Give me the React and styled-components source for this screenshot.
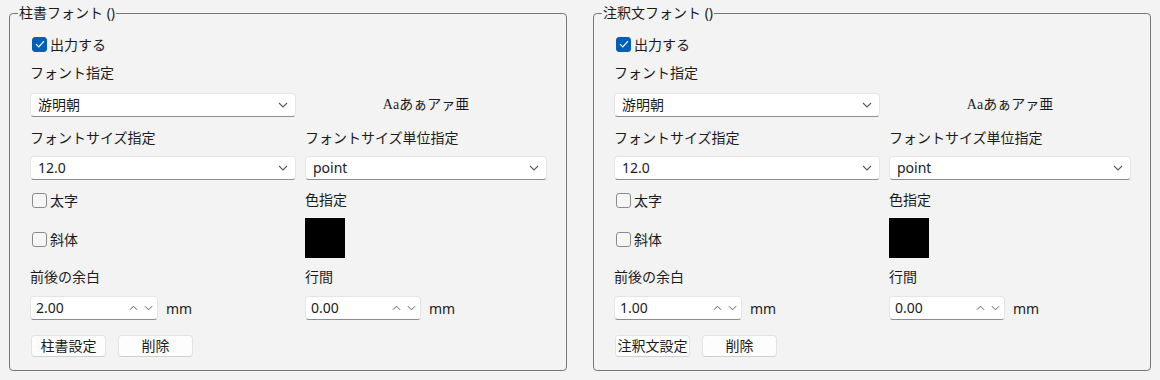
import React from 'react';
import styled, { createGlobalStyle } from 'styled-components';

const GlobalStyle = createGlobalStyle`
  html, body {
    margin: 0;
    background: #f3f3f3;
  }

  body {
    font-family: "Noto Sans", "Noto Sans CJK JP", sans-serif;
    font-size: 14px;
    color: #1b1b1b;
  }
`;

const Page = styled.div`
  display: flex;
  gap: 26px;
  padding: 3px 0 0 9px;
  width: 1160px;
  height: 380px;
  box-sizing: border-box;
`;

const Group = styled.fieldset`
  margin: 0;
  padding: 0;
  min-width: 0;
  width: 558px;
  height: 368px;
  box-sizing: border-box;
  border: 1px solid #767676;
  border-radius: 4px;
`;

const Legend = styled.legend`
  margin-left: 8px;
  padding: 0 1px;
  font-size: 14px;
  line-height: 20px;
`;

const Body = styled.div`
  display: flex;
  flex-direction: column;
  padding: 11px 0 0 20px;
`;

const Row = styled.div`
  display: grid;
  grid-template-columns: 266px 242px;
  column-gap: 9px;
  align-items: ${(p) => p.$align || 'center'};
  margin-top: ${(p) => p.$gap || 0}px;
`;

const Stack = styled.div`
  display: flex;
  flex-direction: column;
  gap: ${(p) => p.$gap}px;
`;

const Label = styled.div`
  height: 20px;
  line-height: 20px;
  white-space: nowrap;
`;

const CheckRow = styled.label`
  display: flex;
  align-items: center;
  gap: 3px;
  height: 20px;
  padding-left: 2px;
  white-space: nowrap;
`;

const Box = styled.span`
  display: inline-flex;
  align-items: center;
  justify-content: center;
  width: 15px;
  height: 15px;
  box-sizing: border-box;
  border-radius: 3px;
  border: 1px solid ${(p) => (p.$checked ? '#005fb8' : '#8a8a8a')};
  background: ${(p) => (p.$checked ? '#005fb8' : '#f6f6f6')};
`;

const Field = styled.div`
  display: flex;
  align-items: center;
  justify-content: space-between;
  width: ${(p) => (p.$width ? `${p.$width}px` : '100%')};
  height: 24px;
  box-sizing: border-box;
  padding: 0 ${(p) => p.$padRight}px 0 ${(p) => p.$padLeft}px;
  background: #ffffff;
  border: 1px solid #e5e5e5;
  border-bottom-color: #8c8c8c;
  border-radius: 4px;
  line-height: 20px;
`;

const Arrows = styled.div`
  display: flex;
  align-items: center;
  gap: 6px;
`;

const Preview = styled.div`
  text-align: center;
  font-family: "Liberation Serif", "Noto Sans CJK JP", serif;
  font-size: 14px;
  line-height: 20px;
`;

const Swatch = styled.div`
  width: 40px;
  height: 40px;
  background: ${(p) => p.$color};
`;

const SpinLine = styled.div`
  display: flex;
  align-items: center;
  gap: 8px;
`;

const Buttons = styled.div`
  display: flex;
  gap: 12px;
  margin-top: 15px;
  padding-left: 1px;
`;

const Button = styled.button`
  width: 75px;
  height: 22px;
  padding: 0;
  box-sizing: border-box;
  font: inherit;
  font-size: 14px;
  line-height: 20px;
  color: #1b1b1b;
  white-space: nowrap;
  background: #fdfdfd;
  border: 1px solid #e3e3e3;
  border-bottom-color: #cfcfcf;
  border-radius: 4px;
`;

const Chevron = ({ up, width = 10 }) => (
  <svg width={width} height="6" viewBox="0 0 10 6" fill="none">
    <path
      d={up ? 'M1 5 L5 1 L9 5' : 'M1 1 L5 5 L9 1'}
      stroke="#5a5a5a"
      strokeWidth="1.1"
    />
  </svg>
);

const Checkbox = ({ checked, label }) => (
  <CheckRow>
    <Box $checked={checked}>
      {checked && (
        <svg width="10" height="8" viewBox="0 0 10 8" fill="none">
          <path d="M1 4.2 L3.8 7 L9 1.2" stroke="#ffffff" strokeWidth="1.2" />
        </svg>
      )}
    </Box>
    {label}
  </CheckRow>
);

const Combo = ({ value }) => (
  <Field $padLeft={7} $padRight={7}>
    <span>{value}</span>
    <Chevron />
  </Field>
);

const Spin = ({ value, width }) => (
  <SpinLine>
    <Field $width={width} $padLeft={5} $padRight={4}>
      <span>{value}</span>
      <Arrows>
        <Chevron up width={9} />
        <Chevron width={9} />
      </Arrows>
    </Field>
    <span>mm</span>
  </SpinLine>
);

const FontGroup = ({ title, margin, settingLabel }) => (
  <Group>
    <Legend>{title}</Legend>

    <Body>
      <Checkbox checked label={'出力する'} />

      <Row $gap={9}>
        <Label>{'フォント指定'}</Label>
      </Row>

      <Row $gap={10}>
        <Combo value={'游明朝'} />
        <Preview>{'Aaあぁアァ亜'}</Preview>
      </Row>

      <Row $gap={11}>
        <Label>{'フォントサイズ指定'}</Label>
        <Label>{'フォントサイズ単位指定'}</Label>
      </Row>

      <Row $gap={8}>
        <Combo value={'12.0'} />
        <Combo value={'point'} />
      </Row>

      <Row $gap={10} $align={'start'}>
        <Stack $gap={19}>
          <Checkbox label={'太字'} />
          <Checkbox label={'斜体'} />
        </Stack>
        <Stack $gap={8}>
          <Label>{'色指定'}</Label>
          <Swatch $color={'#000000'} />
        </Stack>
      </Row>

      <Row $gap={9}>
        <Label>{'前後の余白'}</Label>
        <Label>{'行間'}</Label>
      </Row>

      <Row $gap={9}>
        <Spin value={margin} width={128} />
        <Spin value={'0.00'} width={116} />
      </Row>

      <Buttons>
        <Button>{settingLabel}</Button>
        <Button>{'削除'}</Button>
      </Buttons>
    </Body>
  </Group>
);

const App = () => (
  <>
    <GlobalStyle />
    <Page>
      <FontGroup
        margin={'2.00'}
        settingLabel={'柱書設定'}
        title={'柱書フォント ()'}
      />
      <FontGroup
        margin={'1.00'}
        settingLabel={'注釈文設定'}
        title={'注釈文フォント ()'}
      />
    </Page>
  </>
);

export default App;
